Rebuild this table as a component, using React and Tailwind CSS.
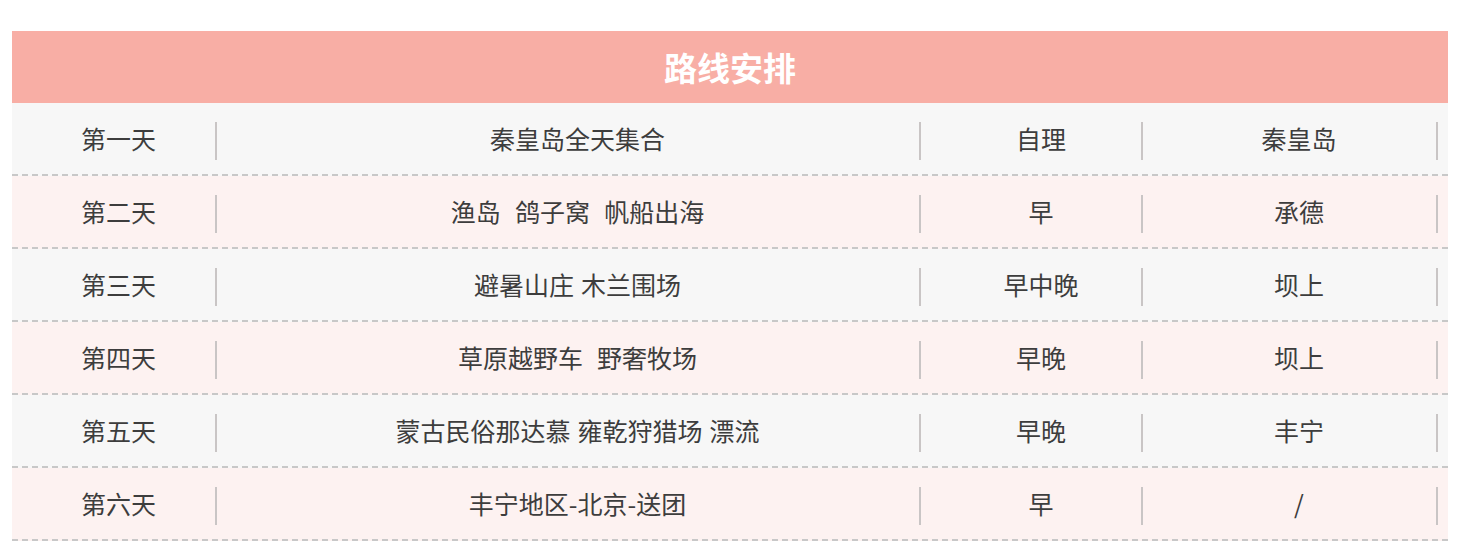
import React from "react";

const rows = [
  ["第一天", "秦皇岛全天集合", "自理", "秦皇岛"],
  ["第二天", "渔岛  鸽子窝  帆船出海", "早", "承德"],
  ["第三天", "避暑山庄 木兰围场", "早中晚", "坝上"],
  ["第四天", "草原越野车  野奢牧场", "早晚", "坝上"],
  ["第五天", "蒙古民俗那达慕 雍乾狩猎场 漂流", "早晚", "丰宁"],
  ["第六天", "丰宁地区-北京-送团", "早", "/"],
];

function Cell({ w, pl, children }) {
  return (
    <div className={`flex h-full shrink-0 ${w}`}>
      <div className={`flex flex-1 items-center justify-center whitespace-pre pt-[1px] [word-spacing:1.5px] ${pl}`}>{children}</div>
      <div className="mt-[19px] h-[38px] w-[2px] bg-[#c9c5c5]" />
    </div>
  );
}

export default function App() {
  return (
    <div className="min-h-[557px] bg-white pt-[31px]" style={{ fontFamily: '"Noto Sans CJK SC", "Noto Sans", sans-serif' }}>
      <div className="ml-[12px] w-[1436px]">
        <div className="flex h-[72px] items-center justify-center bg-[#f8aea5] text-[33px] font-bold leading-none text-white">
          路线安排
        </div>
        {rows.map((r, i) => (
          <div
            key={i}
            className={`flex h-[73px] border-b-2 border-dashed border-[#c8c8c8] text-[25px] text-[#3d3d3d] ${i % 2 === 0 ? "bg-[#f7f7f7]" : "bg-[#fdf2f1]"}`}
          >
            <Cell w="w-[205px]" pl="pl-[10px]">{r[0]}</Cell>
            <Cell w="w-[704px]" pl="pl-[19px]">{r[1]}</Cell>
            <Cell w="w-[222px]" pl="pl-[20px]">{r[2]}</Cell>
            <Cell w="w-[295px]" pl="pl-[19px]">{r[3]}</Cell>
          </div>
        ))}
      </div>
    </div>
  );
}
